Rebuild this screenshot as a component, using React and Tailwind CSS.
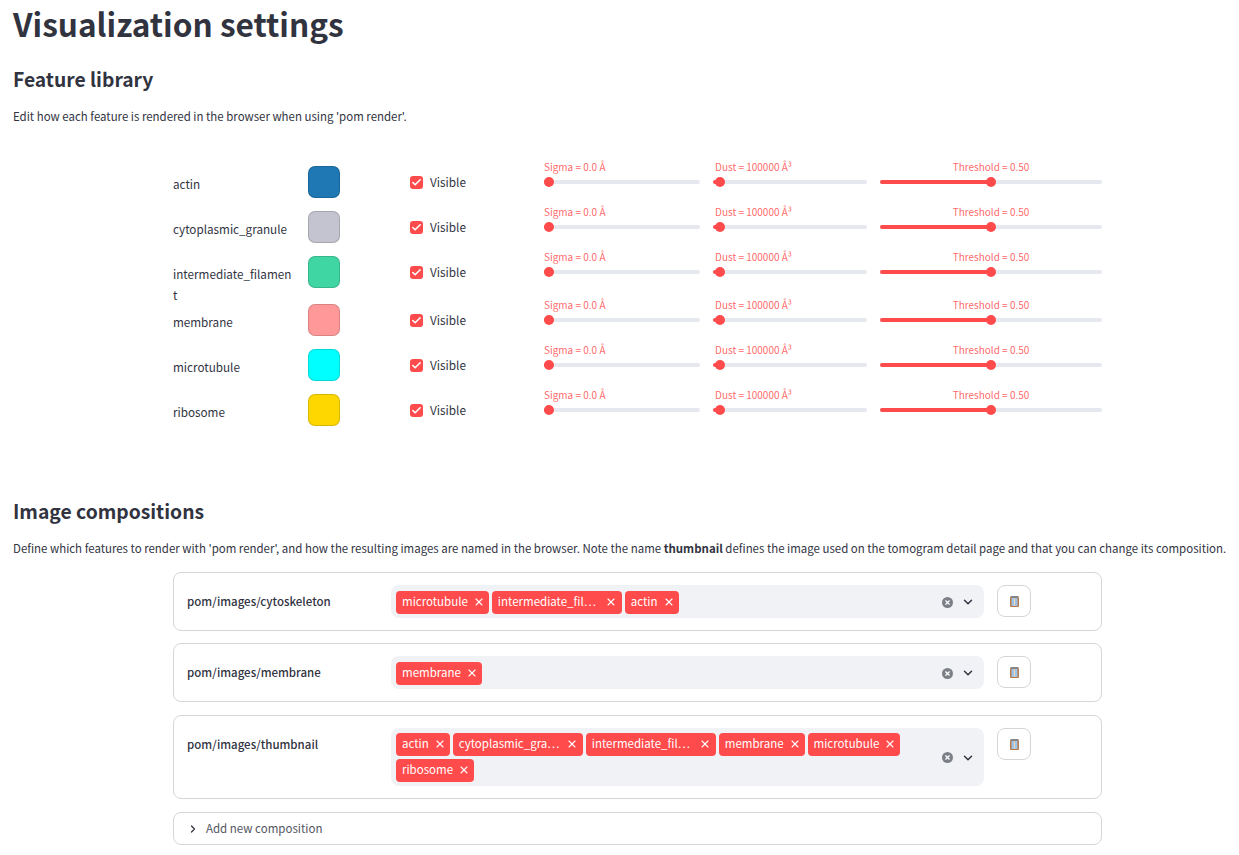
import { Check, ChevronDown, ChevronRight, X } from 'lucide-react';

const FONT = "font-['Noto_Sans_CJK_SC','Noto_Sans',sans-serif]";

const FEATURES = [
  { name: 'actin', color: '#1f77b4' },
  { name: 'cytoplasmic_granule', color: '#c4c4d0' },
  { name: 'intermediate_filament', color: '#40d6a3' },
  { name: 'membrane', color: '#ff9999' },
  { name: 'microtubule', color: '#00ffff' },
  { name: 'ribosome', color: '#ffd700' },
];

const COMPOSITIONS = [
  {
    path: 'pom/images/cytoskeleton',
    tags: ['microtubule', 'intermediate_fil…', 'actin'],
  },
  { path: 'pom/images/membrane', tags: ['membrane'] },
  {
    path: 'pom/images/thumbnail',
    tags: ['actin', 'cytoplasmic_gra…', 'intermediate_fil…', 'membrane', 'microtubule', 'ribosome'],
  },
];

function Slider({ label, center, percent, width, inset }) {
  return (
    <div className={`${width} shrink-0`}>
      <div className={`h-[16px] text-[10px] leading-[16px] text-[#ff4b4b]/85 ${center ? 'text-center' : ''} ${inset ? 'pl-[2px]' : ''}`}>{label}</div>
      <div className="relative mt-[5px] h-[4px] rounded-full bg-[#e6e8ef]">
        <div className="h-full rounded-full bg-[#ff4b4b]" style={{ width: `${percent}%` }} />
        <div
          className="absolute top-[-3px] ml-[-5px] h-[10px] w-[10px] rounded-full bg-[#ff4b4b]"
          style={{ left: `${percent}%` }}
        />
      </div>
    </div>
  );
}

function FeatureRow({ name, color }) {
  return (
    <div className="flex min-h-[45px] items-start">
      <div className="mb-[-0.5px] w-[135px] shrink-0 pt-[6.5px] pr-[15px] text-[11.7px] leading-[21px] break-all text-[#31333f]">{name}</div>
      <div
        className="h-[32px] w-[32px] shrink-0 rounded-[7px] border border-black/15"
        style={{ backgroundColor: color }}
      />
      <div className="ml-[70px] flex w-[134px] shrink-0 items-center pt-[9px]">
        <span className="flex h-[13px] w-[13px] items-center justify-center rounded-[3px] bg-[#ff4b4b]">
          <Check className="h-[11px] w-[11px] text-white" strokeWidth={3.5} />
        </span>
        <span className="ml-[7px] text-[11.8px] leading-[14px] text-[#31333f]">Visible</span>
      </div>
      <div className="mt-[-7px] flex gap-[13px]">
        <Slider label="Sigma = 0.0 Å" percent={3} width="w-[156px]" />
        <Slider label="Dust = 100000 Å³" percent={4.5} width="w-[154px]" inset />
        <Slider label="Threshold = 0.50" percent={50} width="w-[222px]" center />
      </div>
    </div>
  );
}

function Tag({ label }) {
  const truncated = label.endsWith('…');
  return (
    <span className={`flex h-[23px] items-center rounded-[4px] bg-[#ff4b4b] pb-[1px] pl-[6px] text-[11.5px] text-white ${truncated ? 'w-[130px] justify-between pr-[7px]' : 'pr-[6px]'}`}>
      {label}
      <X className="mr-[-2px] ml-[5px] h-[12px] w-[12px]" strokeWidth={2.2} />
    </span>
  );
}

function TrashIcon() {
  return (
    <svg width="9" height="11" viewBox="0 0 9 11">
      <rect x="0" y="1" width="9" height="10" rx="1" fill="#b87a4a" />
      <rect x="1.5" y="2" width="6" height="8" fill="#9fc3e8" />
      <rect x="4" y="2.5" width="1" height="7" fill="#f0d9b5" />
      <rect x="0.5" y="0" width="8" height="1.5" fill="#7d8791" />
    </svg>
  );
}

function CompositionCard({ path, tags }) {
  return (
    <div className="flex items-start rounded-[8px] border border-[#d6d6d8] pt-[12px] pr-[70px] pb-[12px] pl-[13px]">
      <div className="w-[204px] shrink-0 pt-[6px] text-[11.5px] leading-[21px] font-medium text-[#31333f]">{path}</div>
      <div className="flex min-h-[33px] w-[593px] shrink-0 items-center rounded-[8px] bg-[#f0f2f6] pt-[5px] pr-[9px] pb-[4px] pl-[5px]">
        <div className="flex flex-1 flex-wrap gap-x-[3px] gap-y-[3px]">
          {tags.map((t, i) => <Tag key={i} label={t} />)}
        </div>
        <span className="ml-[10px] flex h-[11px] w-[11px] items-center justify-center rounded-full bg-[#7d7f87]">
          <X className="h-[7px] w-[7px] text-white" strokeWidth={4} />
        </span>
        <ChevronDown className="ml-[8px] h-[14px] w-[14px] text-[#31333f]" strokeWidth={2.5} />
      </div>
      <button className="ml-[13px] flex h-[32px] w-[34px] shrink-0 items-center justify-center rounded-[8px] border border-[#d6d6d8] bg-white">
        <TrashIcon />
      </button>
    </div>
  );
}

export default function App() {
  return (
    <div className={`${FONT} h-[855px] overflow-hidden bg-white px-[13px] text-[#31333f]`}>
      <h1 className="pt-[1px] text-[31.6px] leading-[44px] font-bold">Visualization settings</h1>
      <h2 className="mt-[18px] text-[19.3px] leading-[32px] font-semibold">Feature library</h2>
      <p className="mt-[12px] text-[11.46px] leading-[18px]">Edit how each feature is rendered in the browser when using 'pom render'.</p>

      <div className="mt-[41px] ml-[160px] w-[929px]">
        {FEATURES.map((f) => <FeatureRow key={f.name} {...f} />)}
      </div>

      <h2 className="mt-[56px] text-[19.3px] leading-[32px] font-semibold">Image compositions</h2>
      <p className="mt-[12px] text-[11.46px] leading-[18px] whitespace-nowrap">
        Define which features to render with 'pom render', and how the resulting images are named in the browser. Note the name <b>thumbnail</b> defines the image used on the tomogram detail page and that you can change its composition.
      </p>

      <div className="mt-[15px] ml-[160px] flex w-[929px] flex-col gap-[12px]">
        {COMPOSITIONS.map((c, i) => (
          <div key={c.path} className={i === 2 ? 'mt-[1px]' : ''}>
            <CompositionCard {...c} />
          </div>
        ))}
        <div className="mt-[1px] flex h-[33px] items-center rounded-[8px] border border-[#d6d6d8] pl-[13px] text-[11.5px]">
          <ChevronRight className="h-[12px] w-[12px]" strokeWidth={2.5} />
          <span className="ml-[7px] text-[#53555f]">Add new composition</span>
        </div>
      </div>
    </div>
  );
}
